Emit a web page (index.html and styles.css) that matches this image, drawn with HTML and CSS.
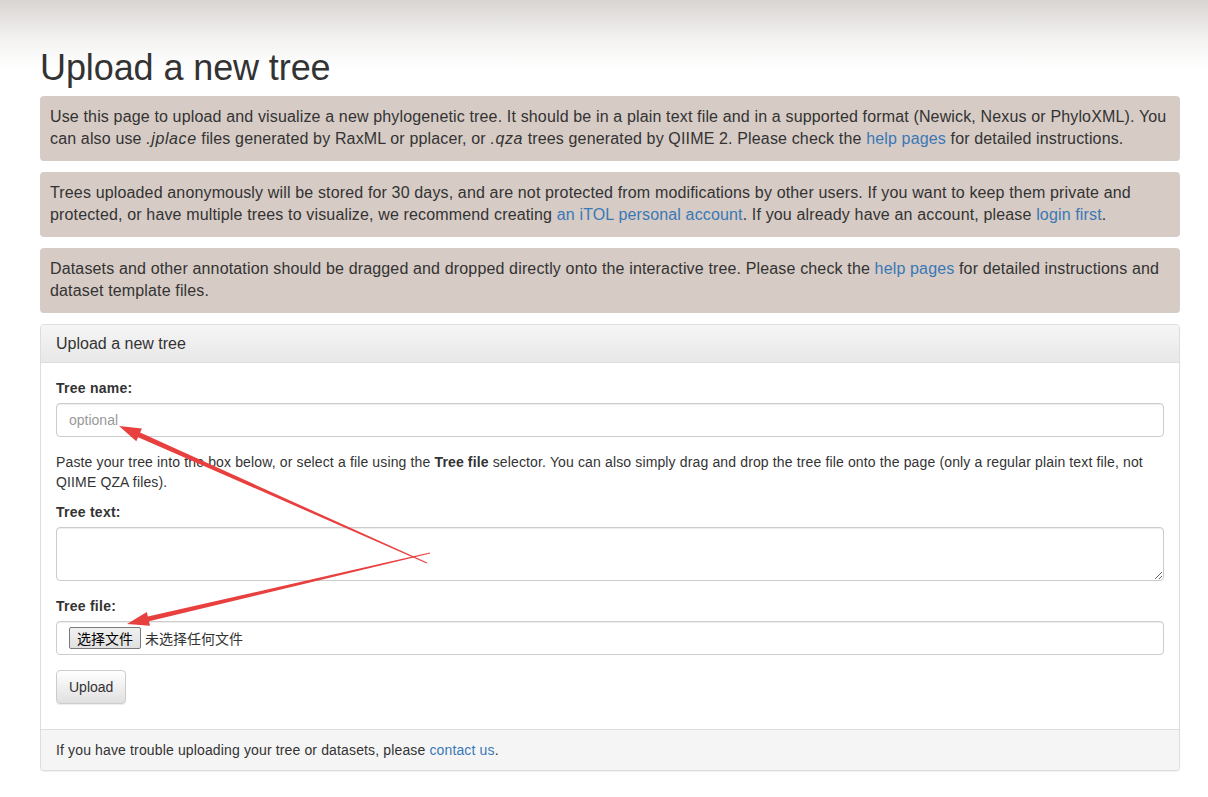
FILE: index.html
```html
<!DOCTYPE html>
<html lang="en">
<head>
<meta charset="utf-8">
<title>Upload a new tree</title>
<link rel="stylesheet" href="styles.css">
</head>
<body>
<div class="page">
  <div class="container">
    <h1 class="title">Upload a new tree</h1>
    <div class="alert">Use this page to upload and visualize a new phylogenetic tree. It should be in a plain text file and in a supported format (Newick, Nexus or PhyloXML). You can also use <em>.jplace</em> files generated by RaxML or pplacer, or <em>.qza</em> trees generated by QIIME 2. Please check the <a href="#">help pages</a> for detailed instructions.</div>
    <div class="alert">Trees uploaded anonymously will be stored for 30 days, and are not protected from modifications by other users. If you want to keep them private and protected, or have multiple trees to visualize, we recommend creating <a href="#">an iTOL personal account</a>. If you already have an account, please <a href="#">login first</a>.</div>
    <div class="alert">Datasets and other annotation should be dragged and dropped directly onto the interactive tree. Please check the <a href="#">help pages</a> for detailed instructions and dataset template files.</div>

    <div class="panel">
      <div class="panel-heading">Upload a new tree</div>
      <div class="panel-body">
        <div class="form-group">
          <label class="label">Tree name:</label>
          <input class="control" type="text" placeholder="optional">
        </div>
        <p class="help">Paste your tree into the box below, or select a file using the <b>Tree file</b> selector. You can also simply drag and drop the tree file onto the page (only a regular plain text file, not QIIME QZA files).</p>
        <div class="form-group">
          <label class="label">Tree text:</label>
          <textarea class="control area" rows="2"></textarea>
        </div>
        <div class="form-group">
          <label class="label">Tree file:</label>
          <div class="control file">
            <span class="file-btn">选择文件</span><span class="file-text">未选择任何文件</span>
          </div>
        </div>
        <div class="actions">
          <button class="btn" type="button">Upload</button>
        </div>
      </div>
      <div class="panel-footer">If you have trouble uploading your tree or datasets, please <a href="#">contact us</a>.</div>
    </div>
  </div>
</div>
<svg class="annot" width="1208" height="797" viewBox="0 0 1208 797">
  <polygon fill="#e8403e" points="119,426 141.9,428.5 140.1,432.6 427.2,562.6 426.8,563.4 138.1,437.2 136.3,441.3"/>
  <polygon fill="#e8403e" points="127,624 150,625.7 149,621.3 430.1,553.4 429.9,552.6 147.8,616.5 146.8,612.1"/>
</svg>
</body>
</html>
```

FILE: styles.css
```css
html, body {
  margin: 0;
  padding: 0;
}
body {
  position: relative;
  font-family: "Liberation Sans", Arial, "Noto Sans CJK SC", sans-serif;
  font-size: 14px;
  line-height: 20px;
  letter-spacing: 0.14px;
  color: #333;
  background: #fff;
}
.page {
  background: linear-gradient(to bottom, #d8d4d2 0px, #f4f3f2 40px, #ffffff 70px);
  background-repeat: no-repeat;
  background-size: 100% 90px;
  padding-top: 1px;
  min-height: 796px;
}
.container {
  width: 1140px;
  margin-left: 40px;
}
a {
  color: #3a78b5;
  text-decoration: none;
}
.title {
  font-size: 36px;
  font-weight: 500;
  line-height: 39.6px;
  letter-spacing: -0.1px;
  margin: 47px 0 8px;
  color: #333;
}
.alert {
  background: #d6cbc5;
  border-radius: 4px;
  padding: 10px 10px;
  font-size: 16px;
  line-height: 22.5px;
  letter-spacing: 0.15px;
  margin-bottom: 11px;
}
.alert em {
  letter-spacing: 0.6px;
}
.panel {
  border: 1px solid #ddd;
  border-radius: 4px;
  box-shadow: 0 1px 1px rgba(0,0,0,0.06);
  background: #fff;
}
.panel-heading {
  background: linear-gradient(to bottom, #f5f5f5, #e8e8e8);
  border-bottom: 1px solid #ddd;
  border-radius: 3px 3px 0 0;
  padding: 10px 15px;
  font-size: 16px;
  line-height: 17px;
  letter-spacing: 0;
}
.panel-body {
  padding: 15px 15px 25px;
}
.form-group {
  margin-bottom: 15px;
}
.label {
  display: block;
  font-weight: bold;
  font-size: 14px;
  letter-spacing: 0.25px;
  margin-bottom: 5px;
}
.control {
  display: block;
  box-sizing: border-box;
  width: 100%;
  height: 34px;
  padding: 6px 12px;
  font-family: inherit;
  font-size: 14px;
  line-height: 20px;
  color: #555;
  border: 1px solid #ccc;
  border-radius: 4px;
  box-shadow: inset 0 1px 1px rgba(0,0,0,0.075);
  background: #fff;
  margin: 0;
}
.control::placeholder {
  color: #999;
}
.area {
  height: 54px;
  resize: vertical;
}
.file {
  display: flex;
  align-items: center;
  gap: 4px;
  padding-top: 6px;
  letter-spacing: 0;
}
.file-btn {
  box-sizing: border-box;
  height: 22px;
  padding: 0 7px;
  font-family: "Noto Sans CJK SC", sans-serif;
  font-size: 14px;
  line-height: 20px;
  color: #000;
  background: linear-gradient(to bottom, #f0f0f0, #e1e1e1);
  border: 1px solid #7a7a7a;
  border-radius: 2px;
}
.file-text {
  font-family: "Noto Sans CJK SC", sans-serif;
  font-size: 14px;
  color: #333;
}
.help {
  font-size: 14px;
  line-height: 20px;
  margin: 0 0 10px;
}
.actions {
  display: flex;
}
.btn {
  box-sizing: border-box;
  height: 34px;
  padding: 6px 12px;
  font-family: inherit;
  font-size: 14px;
  line-height: 20px;
  color: #333;
  background: linear-gradient(to bottom, #ffffff, #e0e0e0);
  border: 1px solid #ccc;
  border-radius: 4px;
  box-shadow: inset 0 1px 0 rgba(255,255,255,0.15), 0 1px 1px rgba(0,0,0,0.075);
}
.panel-footer {
  background: #f5f5f5;
  border-top: 1px solid #ddd;
  border-radius: 0 0 3px 3px;
  padding: 10px 15px;
  font-size: 14px;
}
.annot {
  position: absolute;
  top: 0;
  left: 0;
  pointer-events: none;
}
```
